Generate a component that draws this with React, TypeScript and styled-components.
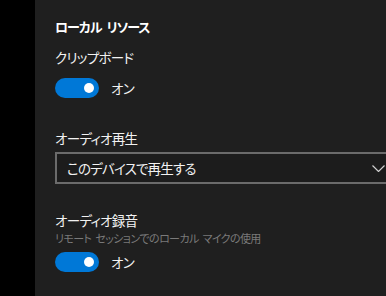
import React from "react";
import styled, { createGlobalStyle } from "styled-components";

const GlobalStyle = createGlobalStyle`
  html, body {
    margin: 0;
    padding: 0;
    background: #000;
    overflow: hidden;
  }
  body {
    font-family: "Noto Sans CJK JP", "Noto Sans", sans-serif;
    font-feature-settings: "palt";
    -webkit-font-smoothing: antialiased;
  }
`;

const Page = styled.div`
  display: flex;
  width: 386px;
  height: 296px;
  overflow: hidden;
`;

const Strip = styled.div`
  width: 35px;
  flex-shrink: 0;
  background: #000;
`;

const Panel = styled.div`
  flex: 1;
  background: #1f1f1f;
  padding: 17px 0 0 20px;
  display: flex;
  flex-direction: column;
  align-items: flex-start;
  color: #fff;
`;

const Heading = styled.div`
  font-size: 13px;
  font-weight: 700;
  letter-spacing: -1px;
  word-spacing: 3px;
  line-height: 20px;
  height: 20px;
  margin-bottom: 10px;
`;

const Label = styled.div<{ $gap?: number }>`
  font-size: 13.5px;
  letter-spacing: -0.7px;
  line-height: 20px;
  height: 20px;
  margin-top: ${(p) => p.$gap ?? 0}px;
  color: #f2f2f2;
`;

const Hint = styled.div`
  font-size: 11px;
  letter-spacing: -0.6px;
  word-spacing: 2px;
  line-height: 16px;
  height: 16px;
  color: #7a7a7a;
`;

const ToggleRow = styled.div<{ $gap: number }>`
  display: flex;
  align-items: center;
  gap: 12px;
  margin-top: ${(p) => p.$gap}px;
  height: 20px;
`;

const Track = styled.div`
  width: 44px;
  height: 20px;
  border-radius: 10px;
  background: #0078d7;
  position: relative;
  flex-shrink: 0;
`;

const Knob = styled.span`
  position: absolute;
  right: 5px;
  top: 5px;
  width: 10px;
  height: 10px;
  border-radius: 50%;
  background: #fff;
`;

const ToggleText = styled.span`
  font-size: 13.5px;
  letter-spacing: -0.7px;
  line-height: 20px;
  color: #f2f2f2;
`;

const Select = styled.div`
  margin-top: 4px;
  width: 342px;
  height: 32px;
  box-sizing: border-box;
  border: 2px solid #6b6b6b;
  background: #1c1c1c;
  display: flex;
  align-items: center;
  justify-content: space-between;
  padding: 0 10px 0 10px;
  flex-shrink: 0;
`;

const SelectText = styled.span`
  font-size: 13.5px;
  letter-spacing: -0.8px;
  line-height: 20px;
  color: #f2f2f2;
`;

const Chevron = () => (
  <svg width="13" height="7" viewBox="0 0 13 7" fill="none">
    <path d="M0.5 0.5 L6.5 6.5 L12.5 0.5" stroke="#cfcfcf" strokeWidth="1.2" />
  </svg>
);

const Toggle = ({ gap }: { gap: number }) => (
  <ToggleRow $gap={gap}>
    <Track>
      <Knob />
    </Track>
    <ToggleText>オン</ToggleText>
  </ToggleRow>
);

export default function App() {
  return (
    <>
      <GlobalStyle />
      <Page>
        <Strip />
        <Panel>
          <Heading>ローカル リソース</Heading>
          <Label>クリップボード</Label>
          <Toggle gap={11} />
          <Label $gap={30}>オーディオ再生</Label>
          <Select>
            <SelectText>このデバイスで再生する</SelectText>
            <Chevron />
          </Select>
          <Label $gap={26}>オーディオ録音</Label>
          <Hint>リモート セッションでのローカル マイクの使用</Hint>
          <Toggle gap={6} />
        </Panel>
      </Page>
    </>
  );
}
